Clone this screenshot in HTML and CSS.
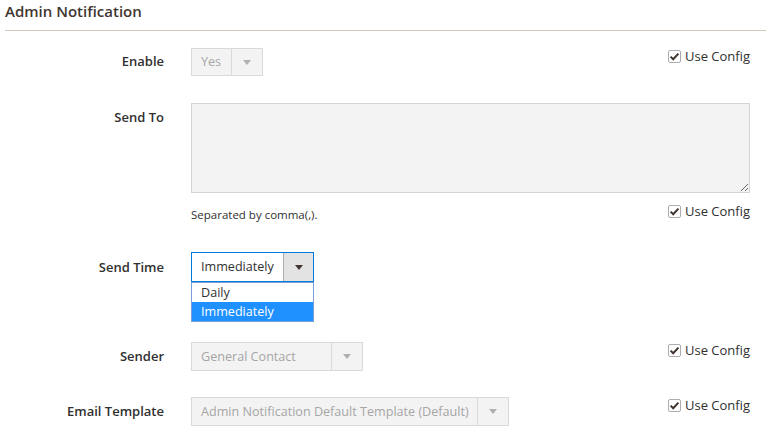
FILE: index.html
```html
<!DOCTYPE html>
<html>
<head>
<meta charset="utf-8">
<link rel="stylesheet" href="styles.css">
</head>
<body>
<div class="section">
  <div class="section-head"><h2 class="title">Admin Notification</h2></div>

  <div class="row row-enable">
    <div class="label">Enable</div>
    <div class="field">
      <div class="select disabled w-enable"><span class="value">Yes</span><span class="arrow"><i class="tri"></i></span></div>
      <label class="use-config"><span class="check"><svg viewBox="0 0 13 13" width="13" height="13"><path d="M2.6 6.6 L5.2 9.2 L10.4 3.6" fill="none" stroke="#41362f" stroke-width="2"/></svg></span>Use Config</label>
    </div>
  </div>

  <div class="row row-sendto">
    <div class="label">Send To</div>
    <div class="field column">
      <textarea class="textarea" disabled></textarea>
      <div class="note-row">
        <span class="note">Separated by comma(,).</span>
        <label class="use-config"><span class="check"><svg viewBox="0 0 13 13" width="13" height="13"><path d="M2.6 6.6 L5.2 9.2 L10.4 3.6" fill="none" stroke="#41362f" stroke-width="2"/></svg></span>Use Config</label>
      </div>
    </div>
  </div>

  <div class="row row-sendtime">
    <div class="label tall">Send Time</div>
    <div class="field">
      <div class="select active w-time">
        <span class="value">Immediately</span><span class="arrow"><i class="tri"></i></span>
        <ul class="dropdown">
          <li class="opt">Daily</li>
          <li class="opt selected">Immediately</li>
        </ul>
      </div>
    </div>
  </div>

  <div class="row row-sender">
    <div class="label">Sender</div>
    <div class="field">
      <div class="select disabled w-sender"><span class="value">General Contact</span><span class="arrow"><i class="tri"></i></span></div>
      <label class="use-config"><span class="check"><svg viewBox="0 0 13 13" width="13" height="13"><path d="M2.6 6.6 L5.2 9.2 L10.4 3.6" fill="none" stroke="#41362f" stroke-width="2"/></svg></span>Use Config</label>
    </div>
  </div>

  <div class="row row-template">
    <div class="label">Email Template</div>
    <div class="field">
      <div class="select disabled w-template"><span class="value">Admin Notification Default Template (Default)</span><span class="arrow"><i class="tri"></i></span></div>
      <label class="use-config"><span class="check"><svg viewBox="0 0 13 13" width="13" height="13"><path d="M2.6 6.6 L5.2 9.2 L10.4 3.6" fill="none" stroke="#41362f" stroke-width="2"/></svg></span>Use Config</label>
    </div>
  </div>
</div>
</body>
</html>
```

FILE: styles.css
```css
* { box-sizing: border-box; }
html, body { margin: 0; padding: 0; background: #fff; }
body {
  font-family: "Open Sans", "Liberation Sans", sans-serif;
  color: #303030;
  width: 766px;
  height: 438px;
  overflow: hidden;
}
.section { margin-left: 5px; }
.section-head {
  height: 31px;
  border-bottom: 1px solid #d1c9bd;
  padding-top: 1px;
}
.title {
  margin: 0;
  font-size: 15px;
  font-weight: 600;
  line-height: 20px;
  color: #41362f;
}
.row {
  display: flex;
  align-items: flex-start;
  padding-right: 16px;
}
.label {
  width: 159px;
  flex: none;
  text-align: right;
  font-size: 13px;
  font-weight: 600;
  line-height: 27px;
  color: #303030;
}
.row-sendto .label { line-height: 28px; }
.label.tall { line-height: 30px; }
.field {
  flex: 1;
  margin-left: 27px;
  display: flex;
  align-items: flex-start;
}
.field.column { flex-direction: column; align-items: stretch; }
.row-enable { margin-top: 17px; }
.row-sendto { margin-top: 27px; }
.row-sendtime { margin-top: 29px; }
.row-sender { margin-top: 60px; }
.row-template { margin-top: 26px; }
.row-sender .label, .row-template .label { line-height: 28px; }

.select {
  position: relative;
  display: flex;
  height: 28px;
  border: 1px solid #dadada;
  background: #f3f3f3;
  font-size: 12.6px;
}
.select .value {
  flex: 1;
  padding-left: 9px;
  line-height: 26px;
  color: #a6a6a6;
  white-space: nowrap;
  overflow: hidden;
}
.select .arrow {
  width: 31px;
  flex: none;
  border-left: 1px solid #dadada;
  display: flex;
  align-items: center;
  justify-content: center;
}
.tri {
  width: 0; height: 0;
  border-left: 4px solid transparent;
  border-right: 4px solid transparent;
  border-top: 5px solid #b0b0b0;
}
.w-enable { width: 72px; }
.w-sender { width: 172px; height: 29px; }
.w-template { width: 318px; height: 29px; }
.w-sender .value, .w-template .value { line-height: 27px; }

.select.active {
  width: 123px;
  height: 30px;
  border-color: #007bdb;
  background: #fff;
}
.select.active .value { color: #303030; line-height: 28px; }
.select.active .arrow {
  width: 30px;
  background: #e3e3e3;
  border-left: 1px solid #adadad;
}
.select.active .tri { border-top-color: #41362f; }

.dropdown {
  position: absolute;
  left: -1px;
  top: 29px;
  width: 123px;
  margin: 0;
  padding: 0;
  list-style: none;
  border: 1px solid #7a9fd6;
  background: #fff;
}
.opt {
  height: 19px;
  line-height: 19px;
  padding-left: 9px;
  font-size: 12.6px;
  color: #303030;
}
.opt.selected { background: #1e90ff; color: #fff; }

.textarea {
  display: block;
  width: 559px;
  height: 90px;
  margin: 0;
  border: 1px solid #d4d4d4;
  background: #f3f3f3;
  resize: both;
  font: inherit;
}
.note-row {
  display: flex;
  align-items: flex-start;
  margin-top: 10px;
  width: 559px;
}
.note {
  font-size: 11.5px;
  color: #303030;
  margin-top: 4px;
  line-height: 16px;
}

.use-config {
  margin-left: auto;
  display: flex;
  align-items: center;
  gap: 4px;
  font-size: 13px;
  line-height: 16px;
  color: #303030;
  white-space: nowrap;
}
.check {
  width: 13px; height: 13px;
  border: 1px solid #adadad;
  border-radius: 2px;
  background: #fff;
  display: block;
  position: relative;
}
.check svg { position: absolute; left: -1px; top: -1px; }
```
